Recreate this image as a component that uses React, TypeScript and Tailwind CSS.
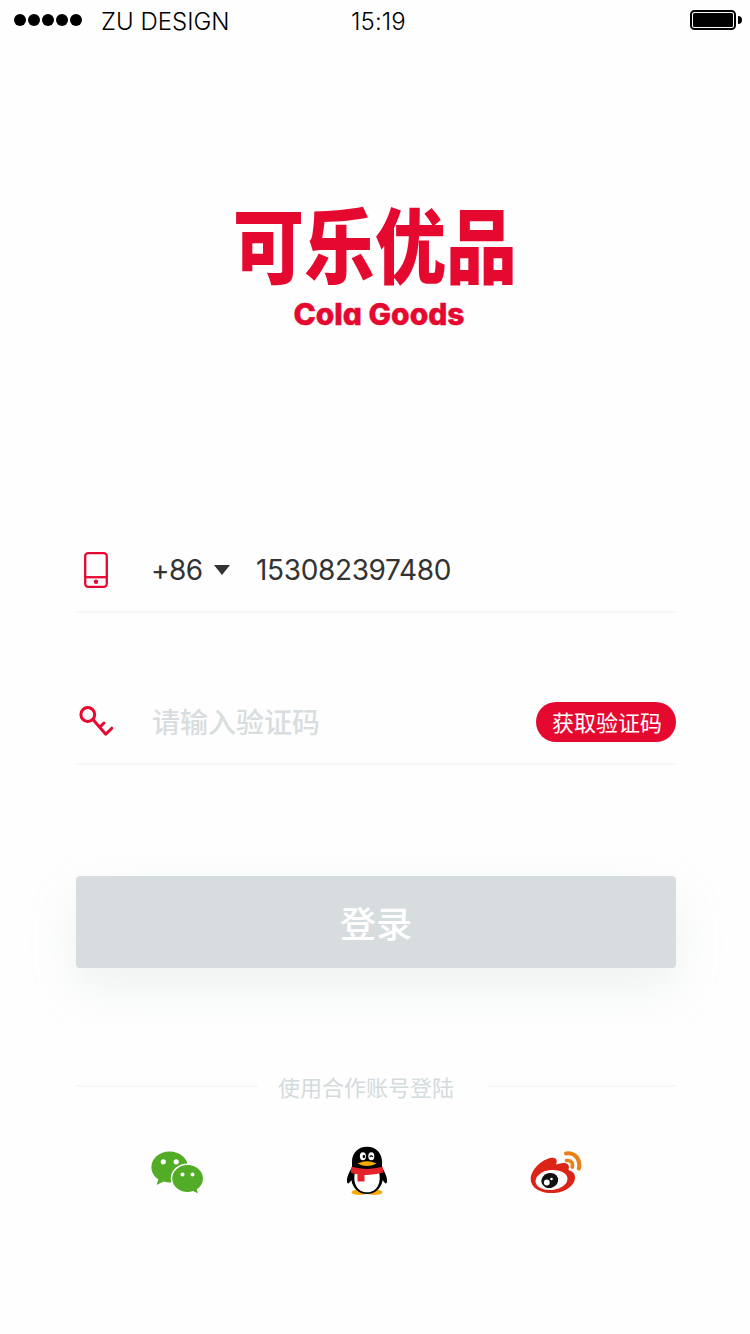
import React from "react";

const cjk = "font-['Noto_Sans_CJK_SC',sans-serif]";

function StatusBar() {
  return (
    <header className="grid h-[42px] grid-cols-[101px_250px_1fr_auto] items-center pr-2 text-[24px] leading-[40px] text-black">
      <div className="flex gap-[2px] pl-[14px] pb-[2px]">
        {[0, 1, 2, 3, 4].map((dot) => (
          <span key={dot} className="size-3 rounded-full bg-black" />
        ))}
      </div>
      <span className="pt-[2px] font-light tracking-[0.02px]">ZU DESIGN</span>
      <span className="pt-[2px] font-light tracking-[0.1px]">15:19</span>
      <svg className="mb-[2px] h-5 w-[52px]" viewBox="0 0 52 20">
        <rect x="1" y="1" width="44" height="18" rx="3.5" fill="none" stroke="#000" strokeWidth="2" />
        <rect x="3" y="3" width="40" height="14" rx="1.5" />
        <path d="M48 6a4 4 0 0 1 0 8z" />
      </svg>
    </header>
  );
}

function Logo() {
  return (
    <div className="mt-[163px] flex flex-col items-center text-[#e50930]">
      <h1 className={`flex h-[72px] w-[284px] scale-y-[1.15] items-center justify-between text-[71px] leading-[72px] font-black ${cjk}`}>
        可乐优品
      </h1>
      <p className="mt-[22px] ml-[8px] h-[30px] text-[30px] leading-[30px] font-extrabold [font-feature-settings:'cv11'] [-webkit-text-stroke:0.5px_#e50930]">
        Cola Goods
      </p>
    </div>
  );
}

function PhoneIcon() {
  return (
    <svg className="ml-2 h-9 w-6" viewBox="0 0 24 36" fill="none" stroke="#e50930" strokeWidth="2.3">
      <rect x="1.2" y="1.2" width="21.6" height="33.6" rx="3" />
      <path d="M1 25.2h22" />
      <circle cx="12" cy="29.7" r="2.2" fill="#e50930" stroke="none" />
    </svg>
  );
}

function KeyIcon() {
  return (
    <svg className="ml-[3px] h-8 w-9" viewBox="0 0 36 32" fill="none" stroke="#e50930" strokeWidth="3" strokeLinecap="round" strokeLinejoin="round">
      <circle cx="8.8" cy="8.5" r="6.9" />
      <path d="M14 13.5L26.8 28.2L32.8 22.2M20.7 21.3L25 17" />
    </svg>
  );
}

function WeChatIcon() {
  return (
    <svg className="h-[43px] w-[53px]" viewBox="0 0 53 43">
      <path fill="#53ac25" d="M18.5.5C8.4.5.4 7.5.4 16.2c0 5 2.6 9.2 7 12L5.6 34l7-3.4c2 .6 4 .9 6.2.9 10.1 0 18.1-7 18.1-15.6S28.6.5 18.5.5z" />
      <path fill="#53ac25" stroke="#fff" strokeWidth="1.5" d="M36.5 13.3c-8.7 0-16 6.3-16 14.2s7.3 14.2 16 14.2c2 0 3.9-.3 5.6-.9l6 3-1.5-5.1c3.7-2.6 6.1-6.6 6.1-11.2 0-7.9-7.4-14.2-16.2-14.2z" />
      <circle cx="12.3" cy="10.8" r="2.6" fill="#fff" />
      <circle cx="25.2" cy="10.8" r="2.6" fill="#fff" />
      <circle cx="31.5" cy="23.6" r="2" fill="#fff" />
      <circle cx="41.5" cy="23.6" r="2" fill="#fff" />
    </svg>
  );
}

function QQIcon() {
  return (
    <svg className="h-[50px] w-[42px]" viewBox="0 0 42 50">
      <ellipse cx="13.5" cy="46.3" rx="8" ry="2.8" fill="#faab00" />
      <ellipse cx="28.5" cy="46.3" rx="8" ry="2.8" fill="#faab00" />
      <path d="M21 .8C12 .8 6 7 6 15.8v5.5C3 26.5.6 31.5 1 35.5c.3 3 2 2.5 4.3-1.5C6.700 42 12.5 48 21 48s14.3-6 15.7-14c2.3 4 4 4.5 4.3 1.5.4-4-2-9-5-14.2v-5.5C36 7 30 .8 21 .8z" fill="#000" />
      <path d="M9 26c-2.500 11 2 20.3 12 20.3S35.500 37 33 26z" fill="#fff" />
      <path d="M5.500 20.800Q21 25 36.500 20.800L37.700 26.300Q28 29.500 18.500 29V35.500H11.500V28.200Q8 28 4.800 26.500z" fill="#e5232b" />
      <ellipse cx="16.9" cy="10.2" rx="3" ry="4" fill="#fff" />
      <ellipse cx="25.3" cy="10.2" rx="3" ry="4" fill="#fff" />
      <ellipse cx="17.9" cy="10.5" rx="1.2" ry="1.8" />
      <path d="M23.700 10.800q1.600-2 3.200 0" fill="none" stroke="#000" strokeWidth="1.2" />
      <path d="M11.500 17.500q9.500-4.600 19 0q-9.500 5.200-19 0z" fill="#faab00" />
    </svg>
  );
}

function WeiboIcon() {
  return (
    <svg className="h-[43px] w-[52px]" viewBox="0 0 52 43">
      <path fill="#dc2318" d="M22 6.8c4-.6 6 2.5 4 6.9 4.5-1.8 10.5-2.7 12.3.2 1 1.6.6 3.5 0 5.2 3.7 1 6.7 3.2 6.7 7.3 0 8-10.5 15.7-23 15.7C10.5 42.1.7 36.9.7 28.2.7 19.4 11.5 8 22 6.8z" />
      <ellipse cx="21.5" cy="29" rx="16" ry="10" fill="#fff" transform="rotate(-6 21.5 29)" />
      <ellipse cx="19.8" cy="29.5" rx="8.5" ry="7.5" fill="#111" transform="rotate(-15 19.8 29.5)" />
      <circle cx="16.8" cy="31.5" r="2.9" fill="#fff" />
      <circle cx="21.5" cy="28" r="1.3" fill="#fff" />
      <g fill="none" stroke="#e98117" strokeLinecap="round">
        <path strokeWidth="4" d="M36 2.500C45 1.200 51 8.500 48.800 17.500" />
        <path strokeWidth="3.5" d="M36.500 9.600c4.500-.6 7 2.600 5.700 6.500" />
      </g>
    </svg>
  );
}

export default function App() {
  return (
    <main className="flex h-[1334px] w-[750px] flex-col bg-[#fefefe] font-['Inter','Noto_Sans_CJK_SC',sans-serif]">
      <StatusBar />
      <Logo />

      <form className="mt-[198px] ml-[76px] w-[600px]" onSubmit={(e) => e.preventDefault()}>
        <div className="flex h-[86px] items-center border-b-2 border-[#f6f7f7] pt-[2px] text-[28px] text-[#333]">
          <div className="w-[75px]"><PhoneIcon /></div>
          <span className="w-[63px] tracking-[-0.6px]">+86</span>
          <svg className="h-[10px] w-4" viewBox="0 0 16 10"><path fill="#333" d="M0 0h16L8 10z" /></svg>
          <span className="ml-[26px] tracking-[-0.35px]">153082397480</span>
        </div>

        <div className="mt-[67px] flex h-[85px] items-center border-b-2 border-[#f6f7f7]">
          <div className="w-[76px]"><KeyIcon /></div>
          <span className={`pb-[2px] text-[28px] font-medium text-[#d8dddf] ${cjk}`}>请输入验证码</span>
          <button type="button" className={`ml-auto h-10 w-[140px] rounded-full bg-[#e50930] pl-[2px] text-[22px] leading-[38px] text-white ${cjk}`}>
            <span className="block h-10">获取验证码</span>
          </button>
        </div>

        <button type="submit" className={`mt-[111px] h-[92px] w-full rounded-[4px] bg-[#d7dddf] text-[36px] leading-[92px] font-medium text-white shadow-[0_20px_50px_rgba(150,175,168,0.15)] ${cjk}`}>登录</button>
      </form>

      <section className="mt-[100px] ml-[76px] w-[600px]">
        <div className="flex h-9 items-center">
          <span className="h-[2px] w-[182px] bg-[#f6f7f7]" />
          <span className={`ml-5 text-[22px] leading-9 text-[#d3dbdd] ${cjk}`}>使用合作账号登陆</span>
          <span className="ml-auto h-[2px] w-[188px] bg-[#f6f7f7]" />
        </div>
        <div className="mt-[42px] flex h-[52px] items-center pl-[75px]">
          <WeChatIcon />
          <div className="ml-[142px] flex pb-[2px]"><QQIcon /></div>
          <div className="ml-[142px]"><WeiboIcon /></div>
        </div>
      </section>
    </main>
  );
}
